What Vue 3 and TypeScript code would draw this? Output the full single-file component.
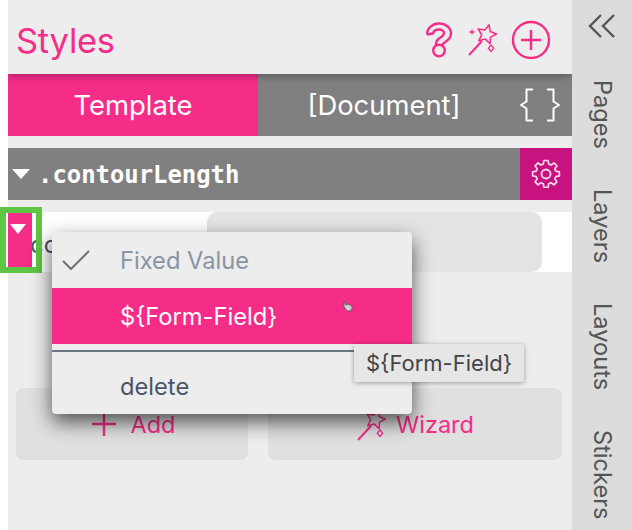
<script setup lang="ts">
  import { ref } from 'vue'

  const sideTabs = ref<string[]>(['Pages', 'Layers', 'Layouts', 'Stickers'])
  const sectionName = ref('.contourLength')
</script>

<template>
  <div class="page">
    <div class="panel">
      <header class="head">
        <h1 class="title">Styles</h1>
        <div class="head-icons">
          <svg class="ic-help" width="28" height="36" viewBox="0 0 28 36" fill="none" stroke="#f52c88" stroke-width="2.4" stroke-linejoin="round">
            <path d="M2 12.500C2 6 7.500 1.500 14 1.500c6.500 0 12 4 12 10 0 5-4 7.500-7 9.500-1.500 1-2 1.500-2.500 2.500" />
            <path d="M2 12.500l6-1c.5-2.500 3-4 6-4 2.800 0 5 1.500 5 3.700 0 2.300-2.500 3.600-5 5.300-2 1.300-3 3-3 6.500" />
            <circle cx="14" cy="28.500" r="5.800" />
          </svg>
          <svg class="ic-wand" width="30" height="32" viewBox="0 0 30 32" fill="none" stroke="#f52c88" stroke-width="1.500">
            <path d="M2 31L15 17" stroke-width="2" />
            <path d="M22.100 .8L23.200 7.500 29.500 10 23.500 13.100 23.100 19.800 18.300 15.100 11.700 16.800 14.700 10.800 11.100 5 17.800 6Z" stroke-linejoin="round" />
            <path d="M5 5.500v5M2.500 8h5" stroke-width="1.300" />
            <path d="M24 21l2.700 3.200-2.700 3.200-2.700-3.200z" stroke-width="1.300" />
          </svg>
          <svg class="ic-plus" width="40" height="40" viewBox="0 0 40 40" fill="none" stroke="#f52c88" stroke-width="2.400">
            <circle cx="20" cy="20" r="18" />
            <path d="M20 10v20M10 20h20" />
          </svg>
        </div>
      </header>

      <nav class="tabs">
        <button class="tab tab-on">Template</button>
        <button class="tab tab-doc">[Document]</button>
        <span class="braces">
          <svg width="44" height="34" viewBox="0 0 44 34" fill="none" stroke="#fff" stroke-width="2" stroke-linejoin="round">
            <path d="M15 1.500H8.500v12L3 17l5.500 3.500v12H15" />
            <path d="M29 1.500h6.500v12L41 17l-5.500 3.500v12H29" />
          </svg>
        </span>
      </nav>

      <section class="section-bar">
        <i class="tri tri-bar"></i>
        <span class="section-name">{{ sectionName }}</span>
        <span class="gear">
          <svg width="32" height="32" viewBox="0 0 24 24" fill="none" stroke="#f6d9ea" stroke-width="1.400" stroke-linejoin="round">
            <path d="M10.300 2.500h3.400l.5 2.900 1.900.8 2.400-1.700 2.400 2.400-1.700 2.400.8 1.900 2.900.5v3.400l-2.900.5-.8 1.900 1.700 2.400-2.400 2.400-2.400-1.700-1.900.8-.5 2.900h-3.400l-.5-2.900-1.900-.8-2.400 1.700-2.400-2.400 1.700-2.400-.8-1.900-2.900-.5v-3.400l2.900-.5.8-1.900-1.700-2.400 2.400-2.400 2.400 1.700 1.900-.8z" transform="translate(12 12) scale(.92) translate(-12 -13.500)" />
            <circle cx="12" cy="12" r="3.400" />
          </svg>
        </span>
      </section>

      <div class="prop-row">
        <span class="prop-name">co</span>
        <div class="prop-input"></div>
      </div>

      <div class="actions">
        <button class="action add-btn">
          <svg width="24" height="24" viewBox="0 0 24 24" stroke="#f52c88" stroke-width="2.400"><path d="M12 0v24M0 12h24" /></svg>
          <span>Add</span>
        </button>
        <button class="action wiz-btn">
          <svg width="30" height="32" viewBox="0 0 30 32" fill="none" stroke="#f52c88" stroke-width="1.500">
            <path d="M2 31L15 17" stroke-width="2" />
            <path d="M22.100 .8L23.200 7.500 29.500 10 23.500 13.100 23.100 19.800 18.300 15.100 11.700 16.800 14.700 10.800 11.100 5 17.800 6Z" stroke-linejoin="round" />
            <path d="M24 21l2.700 3.200-2.700 3.200-2.700-3.200z" stroke-width="1.300" />
          </svg>
          <span>Wizard</span>
        </button>
      </div>
    </div>

    <aside class="side">
      <svg class="chev" width="28" height="26" viewBox="0 0 28 26" fill="none" stroke="#555" stroke-width="2.400">
        <path d="M13 1L2 12l11 11" />
        <path d="M26 1L15 12l11 11" />
      </svg>
      <span v-for="t in sideTabs" :key="t" class="side-tab">{{ t }}</span>
    </aside>

    <!-- overlays -->
    <div class="marker">
      <div class="marker-fill"><i class="tri tri-marker"></i></div>
    </div>

    <div class="menu">
      <div class="menu-item item-fixed">
        <svg class="check" width="28" height="20" viewBox="0 0 28 20" fill="none" stroke="#6f6f6f" stroke-width="2">
          <path d="M1 11l8 8L27 1" />
        </svg>
        <span>Fixed Value</span>
      </div>
      <div class="menu-item item-active"><span>${Form-Field}</span></div>
      <div class="menu-sep"></div>
      <div class="menu-item item-delete"><span>delete</span></div>
    </div>

    <svg class="cursor" width="12" height="12" viewBox="0 0 12 12">
      <path d="M2 1l2 4 2-1 4 2v3l-2 2H5L2 7z" fill="#cfcfcf" stroke="#5a5a5a" stroke-width=".9" />
    </svg>

    <div class="tooltip">${Form-Field}</div>
  </div>
</template>

<style>
html, body {
  margin: 0;
  background: #fff;
}
</style>

<style scoped>
.page {
  position: relative;
  display: flex;
  width: 632px;
  height: 530px;
  overflow: hidden;
  padding-left: 8px;
  box-sizing: border-box;
  background: #fff;
  font-family: Inter, "Liberation Sans", sans-serif;
}
.panel {
  flex: 1;
  display: flex;
  flex-direction: column;
  background: #ededed;
  min-width: 0;
}
.head {
  position: relative;
  z-index: 1;
  flex: 0 0 74px;
  display: flex;
  align-items: center;
  justify-content: space-between;
  box-sizing: border-box;
  padding: 6px 21px 0 8px;
  background: #ededed;
  box-shadow: 0 2px 8px rgba(0,0,0,0.3);
  clip-path: inset(0 0 -12px 0);
}
.title {
  margin: 0;
  font-size: 34.400px;
  font-weight: 400;
  color: #f52c88;
  letter-spacing: -0.2px;
}
.head-icons {
  display: flex;
  align-items: center;
  gap: 14px;
}
.tabs {
  flex: 0 0 62px;
  display: flex;
  background: #808080;
}
.tab {
  border: 0;
  padding: 0;
  color: #fff;
  font-family: inherit;
  font-size: 27.400px;
  background: none;
}
.tab-on {
  width: 250px;
  background: #f52c88;
}
.tab-doc {
  width: 252px;
  text-align: center;
}
.braces {
  flex: 1;
  display: flex;
  align-items: center;
  justify-content: center;
  padding-right: 2px;
}
.section-bar {
  flex: 0 0 52px;
  margin-top: 12px;
  display: flex;
  align-items: center;
  background: #808080;
  color: #fff;
}
.section-name {
  margin-left: 8px;
  padding-top: 2px;
  font-family: "DejaVu Sans Mono", "Liberation Mono", monospace;
  font-size: 23.900px;
  font-weight: 700;
}
.gear {
  margin-left: auto;
  width: 52px;
  height: 52px;
  display: flex;
  align-items: center;
  justify-content: center;
  background: #c8127f;
}
.tri {
  display: block;
  width: 0;
  height: 0;
  border-left: 9px solid transparent;
  border-right: 9px solid transparent;
  border-top: 10px solid #fff;
}
.tri-bar {
  margin-left: 4px;
}
.prop-row {
  flex: 0 0 60px;
  margin-top: 12px;
  display: flex;
  align-items: center;
  background: #fff;
}
.prop-name {
  width: 29px;
  margin-left: 22px;
  padding-top: 4px;
  font-size: 24px;
  color: #4a5568;
}
.prop-input {
  margin-left: 148px;
  width: 335px;
  height: 60px;
  border-radius: 10px;
  background: #e4e4e4;
}
.actions {
  margin-top: 116px;
  padding: 0 10px 0 8px;
  display: flex;
  gap: 20px;
}
.action {
  height: 72px;
  border: 0;
  border-radius: 8px;
  background: #e0e0e0;
  color: #f52c88;
  font-family: inherit;
  font-size: 23.500px;
  display: flex;
  align-items: center;
  justify-content: center;
  gap: 15px;
  padding: 0;
}
.add-btn {
  width: 232px;
  box-sizing: border-box;
  padding-left: 3px;
}
.wiz-btn {
  width: 294px;
  gap: 10px;
}
.wiz-btn svg {
  margin-top: 2px;
}
.side {
  flex: 0 0 60px;
  display: flex;
  flex-direction: column;
  align-items: center;
  box-sizing: border-box;
  padding-top: 14px;
  background: #dcdcdc;
  color: #555;
}
.chev {
  margin-bottom: 40px;
  flex: none;
}
.side-tab {
  writing-mode: vertical-rl;
  font-size: 23.600px;
  line-height: 28px;
  margin-bottom: 40px;
  flex: none;
}
.marker {
  position: absolute;
  left: 0;
  top: 207px;
  width: 42px;
  height: 66px;
  box-sizing: border-box;
  border: 6px solid #5ec642;
  padding: 0 4px 0 2px;
}
.marker-fill {
  height: 100%;
  box-sizing: border-box;
  background: #f52c88;
  padding: 11px 0 0 2px;
}
.tri-marker {
  border-left-width: 8px;
  border-right-width: 8px;
  border-top-width: 10px;
}
.menu {
  position: absolute;
  left: 52px;
  top: 232px;
  width: 360px;
  height: 182px;
  border-radius: 4px;
  background: #ededed;
  box-shadow: 0 8px 20px rgba(0,0,0,0.65);
  font-size: 23.700px;
}
.menu-item {
  position: relative;
  height: 56px;
  display: flex;
  align-items: center;
  padding-left: 68px;
}
.item-fixed {
  color: #8a94a3;
}
.check {
  position: absolute;
  left: 10px;
  top: 18px;
}
.item-active {
  background: #f52c88;
  color: #fff;
}
.menu-sep {
  height: 2px;
  margin-top: 6px;
  background: #6b7785;
}
.item-delete {
  height: 60px;
  margin-top: 4px;
  color: #4a5568;
}
.cursor {
  position: absolute;
  left: 342px;
  top: 300px;
}
.tooltip {
  position: absolute;
  left: 354px;
  top: 344px;
  width: 170px;
  height: 38px;
  box-sizing: border-box;
  display: flex;
  align-items: center;
  justify-content: center;
  border-radius: 2px;
  background: #e6e6e6;
  color: #444;
  font-size: 22px;
  box-shadow: 0 1px 5px rgba(0,0,0,0.35);
}
</style>
